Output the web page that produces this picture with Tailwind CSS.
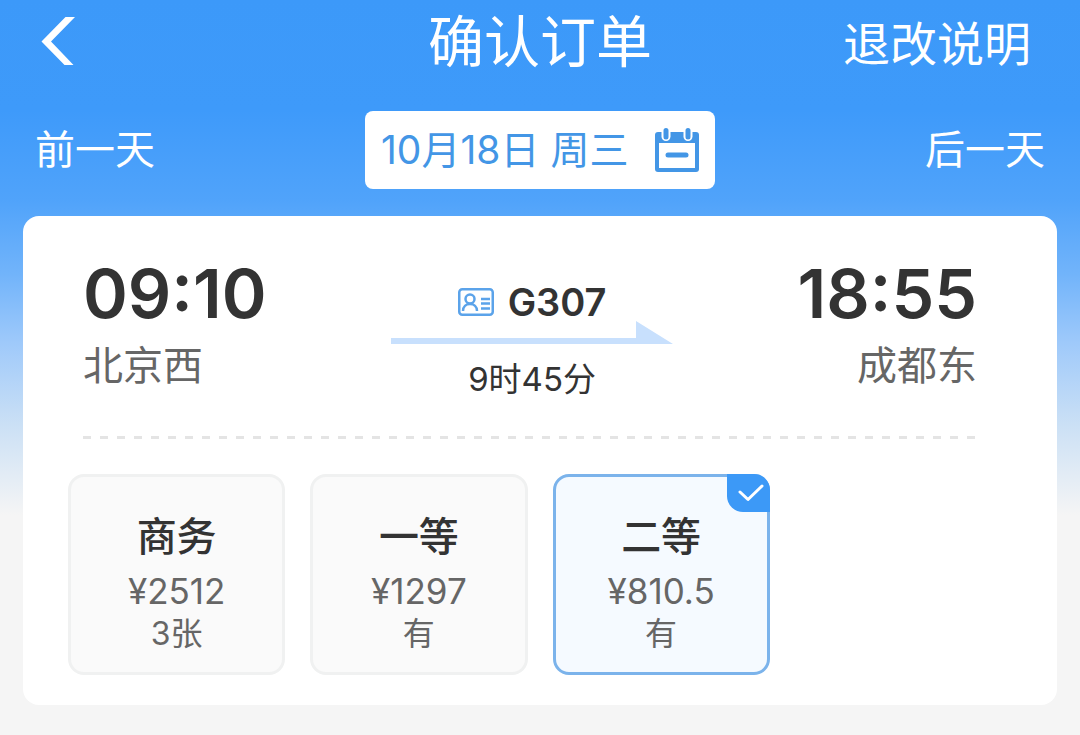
<!DOCTYPE html>
<html lang="zh-CN">
<head>
    <meta charset="UTF-8">
    <meta name="viewport" content="width=device-width, initial-scale=1.0">
    <title>确认订单</title>
    <script src="https://cdn.jsdelivr.net/npm/@tailwindcss/browser@4"></script>
</head>
<body class="min-h-screen bg-[#f5f5f5] font-['Inter','Noto_Sans_CJK_SC',sans-serif] text-[#333333]">
    <div class="min-h-screen px-[23px] pb-[30px] bg-[linear-gradient(180deg,#3c99f9_0px,#3e9afa_110px,#50a3fa_200px,#72b4fa_275px,#a0cafa_345px,#cbe0f5_425px,#f5f5f5_515px)]">
        <!-- Barre de titre -->
        <header class="grid grid-cols-[1fr_auto_1fr] items-center h-[84px] px-4 text-white">
            <button type="button" aria-label="返回" class="w-10 cursor-pointer">
                <svg class="w-10 h-[52px]" viewBox="0 0 40 52" fill="#ffffff"><path d="M26.500 1H36L12 25.500L34.500 49H25.500L2.500 25.500Z"/></svg>
            </button>
            <h1 class="text-[56px] leading-[84px]">确认订单</h1>
            <a href="#" class="justify-self-end pt-1 pr-[10px] text-[47px] leading-[80px]">退改说明</a>
        </header>

        <!-- Choix du jour -->
        <nav class="grid grid-cols-[1fr_auto_1fr] items-center mt-[27px] px-3 text-[40px] text-white">
            <button type="button" class="justify-self-start leading-[78px] cursor-pointer">前一天</button>
            <button type="button" class="flex items-center justify-between w-[350px] h-[78px] px-4 bg-white rounded-lg text-[39px] text-[#4396e6] cursor-pointer">
                <span>10月18日 周三</span>
                <svg class="w-11 h-11" viewBox="0 0 44 44" fill="none">
                    <rect y="4" width="44" height="40" rx="3" fill="#4396e6"/>
                    <rect x="4" y="15" width="36" height="25" fill="#ffffff"/>
                    <rect x="6.500" y="-2" width="9" height="15" rx="4.500" fill="#ffffff"/>
                    <rect x="28.500" y="-2" width="9" height="15" rx="4.500" fill="#ffffff"/>
                    <path d="M11 2.500V9M33 2.500V9" stroke="#4396e6" stroke-width="5" stroke-linecap="round"/>
                    <path d="M13 27H31" stroke="#4396e6" stroke-width="5" stroke-linecap="round"/>
                </svg>
            </button>
            <button type="button" class="justify-self-end leading-[78px] cursor-pointer">后一天</button>
        </nav>

        <main class="mt-[27px] px-[45px] pb-[30px] bg-white rounded-2xl">
            <!-- Trajet -->
            <section class="flex justify-between ml-[15px] mr-[35px] pt-[41px] pb-[33px]">
                <div>
                    <p class="text-[68px] leading-[72px] font-semibold">09:10</p>
                    <p class="mt-[7px] text-[40px] leading-[60px] text-[#666666]">北京西</p>
                </div>
                <div class="flex flex-col items-center mt-[22px]">
                    <div class="flex items-center gap-[14px] text-[38px] leading-[46px] font-semibold">
                        <svg class="w-9 h-7" viewBox="0 0 36 28" fill="none" stroke="#5ba3ea" stroke-width="2.500">
                            <rect x="1.250" y="1.250" width="33.500" height="25.500" rx="3"/>
                            <circle cx="12" cy="11" r="4.500"/>
                            <path d="M5 23C5 18.500 8 16 12 16S19 18.500 19 23M23 11H32M23 15.500H32M23 20.500H32"/>
                        </svg>
                        <span>G307</span>
                    </div>
                    <svg class="w-[282px] h-6 -mt-1" viewBox="0 0 282 24" fill="#c8e0fd"><path d="M0 17H245V0L282 23H0Z"/></svg>
                    <p class="mt-[10px] text-[33px] leading-[48px]">9时45分</p>
                </div>
                <div class="text-right">
                    <p class="text-[68px] leading-[72px] font-semibold">18:55</p>
                    <p class="mt-[7px] text-[40px] leading-[60px] text-[#666666]">成都东</p>
                </div>
            </section>

            <div class="ml-[15px] mr-[35px] h-[3px] bg-[repeating-linear-gradient(90deg,#e4e4e4_0px,#e4e4e4_8px,transparent_8px,transparent_17px)]"></div>

            <!-- Classes de siège -->
            <fieldset aria-label="席别" class="grid grid-cols-4 gap-[25px] mt-[35px]">
                <label class="relative flex flex-col items-center h-[201px] pt-[34px] border-3 border-[#f0f1f1] rounded-2xl bg-[#fafafa] cursor-pointer">
                    <input type="radio" name="seat" value="business" class="sr-only">
                    <span class="text-[40px] leading-[52px] font-medium">商务</span>
                    <span class="mt-1 text-[35px] leading-[48px] text-[#666666]">¥2512</span>
                    <span class="text-[32px] leading-[38px] text-[#666666]">3张</span>
                </label>
                <label class="relative flex flex-col items-center h-[201px] pt-[34px] border-3 border-[#f0f1f1] rounded-2xl bg-[#fafafa] cursor-pointer">
                    <input type="radio" name="seat" value="first" class="sr-only">
                    <span class="text-[40px] leading-[52px] font-medium">一等</span>
                    <span class="mt-1 text-[35px] leading-[48px] text-[#666666]">¥1297</span>
                    <span class="text-[32px] leading-[38px] text-[#666666]">有</span>
                </label>
                <label class="relative flex flex-col items-center h-[201px] pt-[34px] border-3 border-[#7bb3eb] rounded-2xl bg-[#f5faff] cursor-pointer">
                    <input type="radio" name="seat" value="second" class="sr-only" checked>
                    <span class="text-[40px] leading-[52px] font-medium">二等</span>
                    <span class="mt-1 text-[35px] leading-[48px] text-[#666666]">¥810.5</span>
                    <span class="text-[32px] leading-[38px] text-[#666666]">有</span>
                    <span class="absolute -top-[3px] -right-[3px] w-[43px] h-[38px] bg-[#3c99f7] rounded-tr-2xl rounded-bl-2xl">
                        <svg class="w-[43px] h-[38px]" viewBox="0 0 43 38" fill="none" stroke="#ffffff" stroke-width="3" stroke-linecap="round" stroke-linejoin="round"><path d="M13 18L21 25.500L35 12"/></svg>
                    </span>
                </label>
            </fieldset>
        </main>
    </div>
</body>
</html>
